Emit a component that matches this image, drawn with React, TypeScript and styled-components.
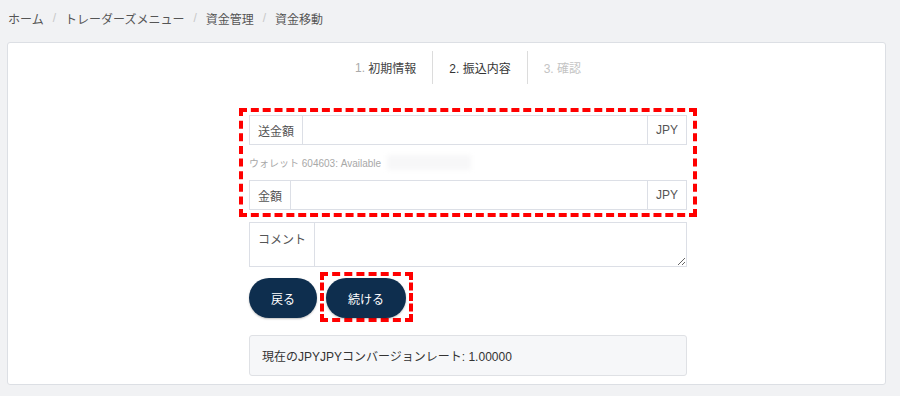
import React from 'react';
import styled, { createGlobalStyle } from 'styled-components';

const GlobalStyle = createGlobalStyle`
	html, body {
		margin: 0;
		padding: 0;
		background: #f1f2f4;
		font-family: 'Liberation Sans', 'Noto Sans CJK JP', sans-serif;
		color: #333;
	}
	* {
		box-sizing: border-box;
	}
`;

const crumbs = ['ホーム', 'トレーダーズメニュー', '資金管理', '資金移動'];

const App = () => {
	const [amount, setAmount] = React.useState('');
	const [sendAmount, setSendAmount] = React.useState('');
	const [comment, setComment] = React.useState('');

	return (
		<>
			<GlobalStyle />
			<Breadcrumb>
				{crumbs.map((c, i) => (
					<React.Fragment key={c}>
						{i > 0 && <CrumbSep>/</CrumbSep>}
						<Crumb>{c}</Crumb>
					</React.Fragment>
				))}
			</Breadcrumb>

			<Card>
				<Column>
					<Steps>
						<Step state="done">
							<StepNum>1.</StepNum> 初期情報
						</Step>
						<Step state="active">2. 振込内容</Step>
						<Step state="todo">3. 確認</Step>
					</Steps>

					<Highlight>
						<InputGroup>
							<Addon>送金額</Addon>
							<Field value={sendAmount} onChange={(e) => setSendAmount(e.target.value)} />
							<Addon side="right">JPY</Addon>
						</InputGroup>
						<Helper>
							ウォレット 604603: Available <Redacted />
						</Helper>
						<InputGroup>
							<Addon>金額</Addon>
							<Field value={amount} onChange={(e) => setAmount(e.target.value)} />
							<Addon side="right">JPY</Addon>
						</InputGroup>
					</Highlight>

					<TextGroup>
						<Addon top>コメント</Addon>
						<Comment value={comment} onChange={(e) => setComment(e.target.value)} />
					</TextGroup>

					<ButtonRow>
						<PillButton>戻る</PillButton>
						<ButtonHighlight>
							<PillButton>続ける</PillButton>
						</ButtonHighlight>
					</ButtonRow>

					<InfoBox>現在のJPYJPYコンバージョンレート: 1.00000</InfoBox>
				</Column>
			</Card>
		</>
	);
};

const Breadcrumb = styled.nav`
	display: flex;
	align-items: center;
	height: 36px;
	padding: 0 8px;
	font-size: 12px;
	color: #555;
`;

const Crumb = styled.span`
	white-space: nowrap;
`;

const CrumbSep = styled.span`
	color: #c8c8c8;
	margin: 0 9px;
`;

const Card = styled.div`
	margin: 6px 14px 0 7px;
	background: #fff;
	border: 1px solid #dcdfe4;
	border-radius: 3px;
	padding: 8px 0 8px 43px;
`;

const Column = styled.div`
	width: 438px;
	margin: 0 auto;
	display: flex;
	flex-direction: column;
`;

const Steps = styled.div`
	display: flex;
	justify-content: center;
	margin-bottom: 24px;
`;

const stepColors = { done: '#444', active: '#333', todo: '#c4c4c4' };

const Step = styled.div<{ state: 'done' | 'active' | 'todo' }>`
	display: flex;
	align-items: center;
	height: 33px;
	padding: 0 16px;
	font-size: 12px;
	white-space: pre;
	color: ${(p) => stepColors[p.state]};
	& + & {
		border-left: 1px solid #dcdcdc;
	}
`;

const StepNum = styled.span`
	color: #aaa;
`;

const Highlight = styled.div`
	margin-left: -10px;
	width: 458px;
	border: 4px dashed #ff0000;
	padding: 3px 6px;
`;

const InputGroup = styled.div`
	display: flex;
	height: 30px;
	border: 1px solid #dcdfe6;
	background: #fff;
`;

const Addon = styled.div<{ side?: 'right'; top?: boolean }>`
	display: flex;
	align-items: ${(p) => (p.top ? 'flex-start' : 'center')};
	padding: ${(p) => (p.top ? '7px 8px 0' : '0 8px')};
	font-size: 12px;
	color: #555;
	white-space: nowrap;
	${(p) => (p.side === 'right' ? 'border-left: 1px solid #dcdfe6;' : 'border-right: 1px solid #dcdfe6;')}
`;

const Field = styled.input`
	flex: 1;
	min-width: 0;
	border: none;
	outline: none;
	padding: 0 8px;
	font: inherit;
	font-size: 12px;
`;

const Helper = styled.div`
	display: flex;
	align-items: center;
	height: 35px;
	font-size: 10px;
	color: #a8a8a8;
	white-space: pre;
`;

const Redacted = styled.span`
	display: inline-block;
	width: 84px;
	height: 15px;
	margin-left: 3px;
	background: #f7f7f8;
	filter: blur(2px);
`;

const TextGroup = styled.div`
	display: flex;
	height: 45px;
	margin-top: 5px;
	border: 1px solid #dcdfe6;
`;

const Comment = styled.textarea`
	flex: 1;
	border: none;
	outline: none;
	resize: vertical;
	padding: 6px 8px;
	font: inherit;
	font-size: 12px;
`;

const ButtonRow = styled.div`
	display: flex;
	align-items: flex-start;
	gap: 3px;
	margin-top: 11px;
	height: 40px;
`;

const ButtonHighlight = styled.div`
	margin-top: -6px;
	border: 4px dashed #ff0000;
	padding: 2px 3px 0 2px;
`;

const PillButton = styled.button`
	height: 40px;
	padding: 0 22px;
	border: none;
	border-radius: 20px;
	background: #0e2e4e;
	color: #fff;
	font: inherit;
	font-size: 12px;
	box-shadow: 0 1px 2px rgba(0, 0, 0, 0.25);
	cursor: pointer;
`;

const InfoBox = styled.div`
	display: flex;
	align-items: center;
	height: 41px;
	margin-top: 17px;
	padding: 0 12px;
	background: #f6f7f9;
	border: 1px solid #dfe1e5;
	border-radius: 3px;
	font-size: 12px;
	color: #333;
`;

export default App;
